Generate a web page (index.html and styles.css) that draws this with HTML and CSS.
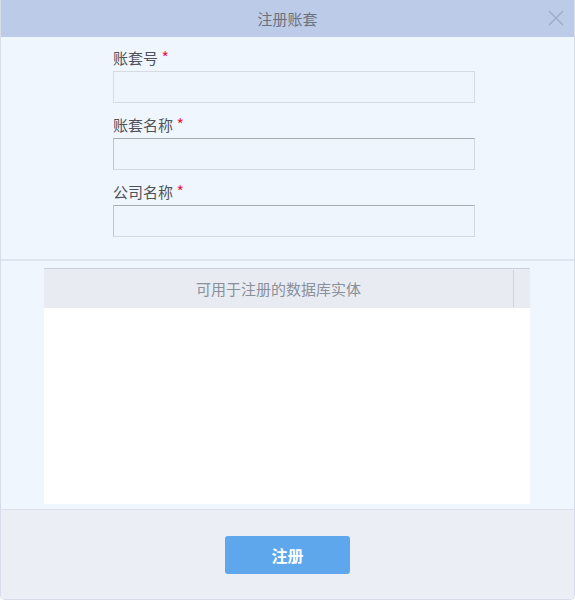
FILE: index.html
```html
<!DOCTYPE html>
<html lang="zh-CN">
<head>
    <meta charset="UTF-8">
    <title>注册账套</title>
    <link rel="stylesheet" href="styles.css">
</head>
<body>
    <div class="dialog">
        <header class="dialog-header">
            <span class="dialog-title">注册账套</span>
            <svg class="close" width="16" height="16" viewBox="0 0 16 16">
                <path d="M1 1 L15 15 M15 1 L1 15" stroke="#9fb0c9" stroke-width="1.6" fill="none"/>
            </svg>
        </header>
        <div class="form">
            <div class="field">
                <label>账套号 <span class="req">*</span></label>
                <input type="text" class="input plain">
            </div>
            <div class="field">
                <label>账套名称 <span class="req">*</span></label>
                <input type="text" class="input">
            </div>
            <div class="field">
                <label>公司名称 <span class="req">*</span></label>
                <input type="text" class="input">
            </div>
        </div>
        <div class="list-area">
            <div class="grid">
                <div class="grid-head">
                    <div class="grid-col">可用于注册的数据库实体</div>
                    <div class="grid-pad"></div>
                </div>
                <div class="grid-body"></div>
            </div>
        </div>
        <footer class="dialog-footer">
            <button class="button">注册</button>
        </footer>
    </div>
</body>
</html>
```

FILE: styles.css
```css
body {
    margin: 0;
    font-family: "Noto Sans CJK SC", "Liberation Sans", sans-serif;
    font-size: 15px;
    background: #ffffff;
}
.dialog {
    width: 575px;
    height: 600px;
    box-sizing: border-box;
    border: 1px solid #d7dee9;
    border-top: none;
    border-radius: 0 0 5px 5px;
    background: #f0f6fd;
    display: flex;
    flex-direction: column;
    overflow: hidden;
}
.dialog-header {
    height: 37px;
    margin: 0 -1px;
    background: #bccbe8;
    display: flex;
    align-items: center;
    justify-content: center;
    position: relative;
}
.dialog-title {
    color: #6c727d;
    font-size: 15px;
}
.close {
    position: absolute;
    right: 11px;
    top: 10px;
}
.form {
    padding: 10px 0 0 112px;
    height: 212px;
    border-bottom: 2px solid #dfe5ef;
}
.field {
    margin-bottom: 11px;
}
.field label {
    display: block;
    height: 21px;
    line-height: 21px;
    color: #4f5359;
    margin-bottom: 3px;
}
.req {
    color: #f0174a;
    font-size: 16px;
}
.input {
    display: block;
    width: 362px;
    height: 32px;
    box-sizing: border-box;
    background: #eff5fd;
    border: 1px solid #d4d9e1;
    border-top-color: #a9abaf;
    border-left-color: #c2c5ca;
    outline: none;
}
.input.plain {
    border-color: #d6dae1;
}
.list-area {
    padding: 7px 0 0 43px;
    height: 241px;
}
.grid {
    width: 486px;
    height: 235px;
    border-top: 1px solid #c9d1dd;
    display: flex;
    flex-direction: column;
}
.grid-head {
    height: 39px;
    background: #e8ebf2;
    display: flex;
    align-items: center;
}
.grid-col {
    flex: 1;
    height: 37px;
    border-right: 1px solid #cfd3da;
    color: #8a9099;
    display: flex;
    align-items: center;
    justify-content: center;
}
.grid-pad {
    width: 16px;
}
.grid-body {
    flex: 1;
    background: #ffffff;
}
.dialog-footer {
    flex: 1;
    background: #ebeef4;
    border-top: 1px solid #dbe1eb;
    display: flex;
    justify-content: center;
    padding-top: 26px;
}
.button {
    width: 125px;
    height: 38px;
    background: #5ea7ec;
    color: white;
    border: none;
    border-radius: 3px;
    font-family: inherit;
    font-size: 16px;
    font-weight: bold;
}
```
